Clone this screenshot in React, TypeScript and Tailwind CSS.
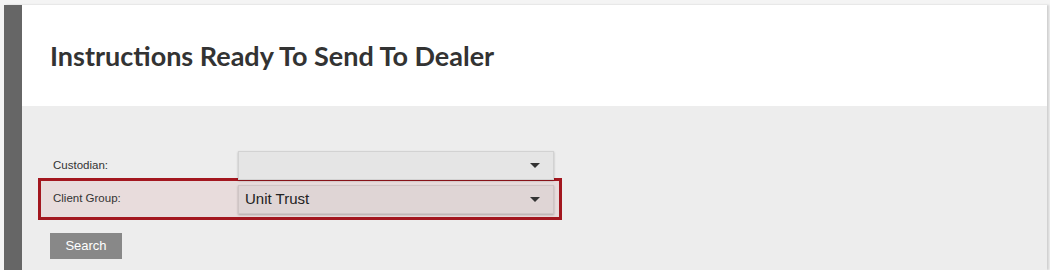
import React from "react";

function Caret() {
  return (
    <svg width="10" height="5" viewBox="0 0 10 5" className="block">
      <path d="M0 0 L10 0 L5 5 Z" fill="#333" />
    </svg>
  );
}

function Select({ value, tinted }: { value?: string; tinted?: boolean }) {
  return (
    <div
      className={
        "w-[316px] h-[29px] flex items-center justify-between pl-[6px] pr-[13px] border shadow-[0_1px_2px_rgba(0,0,0,0.25)] " +
        (tinted ? "bg-[#dfd5d5] border-[#cfc5c5]" : "bg-[#e5e5e5] border-[#d2d2d2]")
      }
    >
      <span className="text-[15px] text-[#222]" style={{ fontFamily: '"Liberation Sans", Arial, sans-serif' }}>
        {value ?? ""}
      </span>
      <Caret />
    </div>
  );
}

export default function App() {
  const sans = { fontFamily: '"Liberation Sans", Arial, sans-serif' };
  return (
    <div className="w-[1050px] h-[270px] bg-[#f4f4f4] pt-[5px] pl-[4px] overflow-hidden">
      <div className="flex w-[1043px] h-[265px] shadow-[2px_0_2px_rgba(0,0,0,0.15)]">
        <div className="w-[18px] bg-[#666666] shrink-0" />
        <div className="flex-1 flex flex-col">
          <div className="h-[101px] bg-white flex items-center pl-[28px] pt-[2px]">
            <h1
              className="text-[27px] font-bold text-[#333]"
              style={{ fontFamily: 'Lato, "Open Sans", sans-serif' }}
            >
              Instructions Ready To Send To Dealer
            </h1>
          </div>
          <div className="flex-1 bg-[#ededed] pl-[16px] pt-[45px]" style={sans}>
            <div className="flex items-center h-[29px] pl-[15px]">
              <span className="w-[185px] text-[11.5px] text-[#333]">Custodian:</span>
              <Select />
            </div>
            <div className="w-[524px] h-[42px] border-[3px] border-[#a3171f] bg-[#e8dcdc] flex items-center pl-[12px] -mt-[2px]">
              <span className="w-[185px] text-[11.5px] text-[#333]">Client Group:</span>
              <Select value="Unit Trust" tinted />
            </div>
            <div className="pl-[12px] mt-[13px]">
              <button className="w-[72px] h-[26px] bg-[#888888] text-white text-[13px]">Search</button>
            </div>
          </div>
        </div>
      </div>
    </div>
  );
}
